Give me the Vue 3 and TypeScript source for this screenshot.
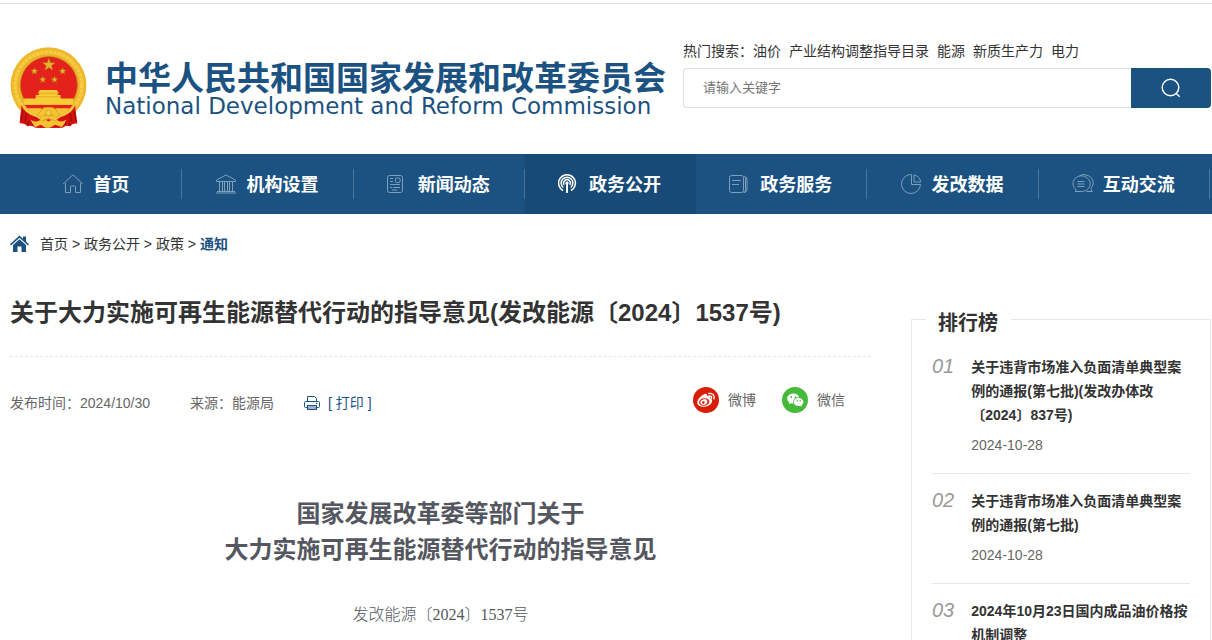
<script setup lang="ts">
interface Rank {
  title: string
  date: string
}

const hotWords: string[] = ['油价', '产业结构调整指导目录', '能源', '新质生产力', '电力']

const navItems: { icon: string; label: string }[] = [
  { icon: 'home', label: '首页' },
  { icon: 'bank', label: '机构设置' },
  { icon: 'news', label: '新闻动态' },
  { icon: 'signal', label: '政务公开' },
  { icon: 'service', label: '政务服务' },
  { icon: 'pie', label: '发改数据' },
  { icon: 'chat', label: '互动交流' },
]
const activeNav = 'signal'

const ranks: Rank[] = [
  { title: '关于违背市场准入负面清单典型案例的通报(第七批)(发改办体改〔2024〕837号)', date: '2024-10-28' },
  { title: '关于违背市场准入负面清单典型案例的通报(第七批)', date: '2024-10-28' },
  { title: '2024年10月23日国内成品油价格按机制调整', date: '2024-10-23' },
]

function star(cx: number, cy: number, r: number): string {
  return Array.from({ length: 10 }, (_, i) => {
    const radius = i % 2 ? r * 0.4 : r
    const a = (Math.PI / 5) * i - Math.PI / 2
    return `${(cx + radius * Math.cos(a)).toFixed(1)},${(cy + radius * Math.sin(a)).toFixed(1)}`
  }).join(' ')
}

const stars: string[] = [star(147, 73, 20), star(104, 92, 11), star(188, 92, 11), star(129, 117, 11), star(164, 117, 11)]
</script>

<template>
  <div class="page">
    <header class="header">
      <a class="logo" href="#">
        <svg class="emblem" viewBox="32 20 228 244" aria-hidden="true">
          <path d="M66 192L60 247Q75 246 83 256Q98 252 106 260H188Q198 252 211 256Q217 246 232 248L224 192Z" fill="#d5120f" />
          <path d="M75 215L70 245M90 226L84 254M205 226L210 254M218 212L223 245M103 235L97 252M193 235L197 252" stroke="#970d0b" stroke-width="4" />
          <circle cx="146" cy="134" r="113" fill="#f0bd30" />
          <circle cx="146" cy="134" r="109" fill="none" stroke="#e6ae26" stroke-width="2" />
          <circle cx="146" cy="134" r="99" fill="none" stroke="#f8cd45" stroke-width="9" stroke-dasharray="9 4" />
          <circle cx="146" cy="134" r="90" fill="none" stroke="#e6ae26" stroke-width="3" />
          <path d="M78 183A85 85 0 1 1 216 183L219 188H74Z" fill="#e5211c" stroke="#b98315" stroke-width="2" />
          <path d="M74 192H219L202 211H168L160 200H132L124 211H91Z" fill="#e5211c" />
          <polygon v-for="points in stars" :key="points" :points="points" fill="#e5b52d" stroke="#a77a13" stroke-width="1" />
          <path d="M120 148H171L177 158H173V163H182V173H220V192H73V173H108V163H118V158H114Z" fill="#f7cc37" />
          <path d="M117 158H174M108 168H182" stroke="#d79d1b" stroke-width="2" />
          <path d="M84 202H126L118 222L90 216ZM166 202H208L202 216L174 222Z" fill="#f3c436" />
          <path d="M66 193Q74 218 111 229L128 241L146 232L164 241L181 229Q217 218 225 193L230 245Q208 251 199 239L178 260H113L93 239Q78 251 61 245Z" fill="#d5120f" />
          <path d="M69 209L66 240M80 218L76 243M210 218L216 243M222 209L227 240" stroke="#8e0c0b" stroke-width="3" />
          <path d="M92 236Q106 246 120 238L135 235L146 242L158 235L172 238Q186 246 199 236Q196 248 186 258L166 251L150 260H137L123 251L106 259Q98 248 92 236Z" fill="#f5c431" />
          <path d="M112 222Q122 216 124 206Q132 200 146 200Q160 200 168 206Q170 216 181 222L167 230L155 219H137L125 230Z" fill="#f5c431" stroke="#d49a1a" stroke-width="2" />
          <circle cx="146" cy="216" r="8" fill="#f8d14b" stroke="#d49a1a" stroke-width="2" />
          <path d="M127 241Q146 225 167 241" fill="none" stroke="#e6aa22" stroke-width="4" />
        </svg>
        <span class="logo-text">
          <span class="logo-cn">中华人民共和国国家发展和改革委员会</span>
          <span class="logo-en">National Development and Reform Commission</span>
        </span>
      </a>
      <div class="search">
        <div class="hot">
          <span>热门搜索：</span>
          <a v-for="word in hotWords" :key="word" href="#">{{ word }}</a>
        </div>
        <form class="search-form" @submit.prevent>
          <input type="text" placeholder="请输入关键字" aria-label="请输入关键字" />
          <button type="submit" aria-label="搜索">
            <svg width="20" height="20" viewBox="0 0 20 20" fill="none" stroke="#fff" stroke-width="1.4" aria-hidden="true">
              <circle cx="9.5" cy="9.5" r="8.3" />
              <path d="M15 15.2L18.7 18.7" />
            </svg>
          </button>
        </form>
      </div>
    </header>

    <nav class="nav">
      <a v-for="item in navItems" :key="item.icon" href="#" :class="['nav-item', { active: item.icon === activeNav }]">
        <svg class="nav-icon" viewBox="0 0 22 22" aria-hidden="true">
          <g v-if="item.icon === 'home'">
            <path d="M1 11.2L10.2 2.5Q11 1.8 11.8 2.5L21 11.2" />
            <path d="M3.5 10V19.5H8.5V14Q8.5 13 9.5 13H12.5Q13.5 13 13.5 14V19.5H18.5V10" />
          </g>
          <g v-else-if="item.icon === 'bank'">
            <path d="M1.5 7L11 2L20.5 7V8.5H1.5Z" />
            <path d="M4.5 8.5V18.5M7.5 8.5V18.5M9.5 8.5V18.5M12.5 8.5V18.5M14.5 8.5V18.5M17.5 8.5V18.5M2 18.5H20M1 20H21" />
          </g>
          <g v-else-if="item.icon === 'news'">
            <rect x=".5" y="2.5" width="15" height="17" rx="2" />
            <path d="M3 5.5H6M3 8.5H6M3 11.5H13M3 14.5H5M6 14.5H13M5 17H10" />
            <rect x="8.5" y="5" width="4.5" height="4.5" rx="1" />
          </g>
          <g v-else-if="item.icon === 'signal'">
            <path d="M5 17.5A8.4 8.4 0 1 1 13 17.5M5.3 14.5A5.8 5.8 0 1 1 12.7 14.5M6.3 11.8A3.3 3.3 0 1 1 11.7 11.8" stroke-width="1.5" />
            <path d="M9 10.5V20" stroke-width="2" />
            <circle cx="9" cy="10" r="1.2" fill="currentColor" />
          </g>
          <g v-else-if="item.icon === 'service'">
            <rect x=".5" y="2.5" width="14" height="17" rx="2" />
            <path d="M15 3Q16.5 3.2 16.5 5V17.5Q16.5 19 15 19.5M17 4Q18 4.4 18 6V16.5Q18 19.3 14.5 19.5M3 7.5H12M3 11.5H10" />
          </g>
          <g v-else-if="item.icon === 'pie'">
            <path d="M9.5 1.5A9.5 9.5 0 1 0 19.5 11.5H10.5V1.5Z" />
            <path d="M13 1.8V9H19.7A9 9 0 0 0 13 1.8Z" />
          </g>
          <g v-else>
            <path d="M4.2 16.800A8.600 7.800 0 1 1 9.500 18.500H3Q4.200 17.900 4.200 16.800Z" />
            <path d="M7.500 2.500Q12 .3 16.700 2.800A8.600 8 0 0 1 19 15.200Q18.600 17 20.500 18.500H14.500M5.500 8.500H12.500M5.500 11H12.500M5.500 13.500H12.500" />
          </g>
        </svg>
        <span>{{ item.label }}</span>
      </a>
    </nav>

    <div class="breadcrumb">
      <svg width="20" height="18" viewBox="0 0 20 18" aria-hidden="true">
        <path d="M0 9.3L9.5 .5L13 3.7V1.5H16V6.5L19 9.3L18 10.5L9.5 2.8L1 10.5Z" fill="#1b5282" />
        <path d="M3 10L9.5 4.2L16 10V17H11.5V11.5H7.5V17H3Z" fill="#1b5282" />
      </svg>
      <p><a href="#">首页</a> &gt; <a href="#">政务公开</a> &gt; <a href="#">政策</a> &gt; <a class="current" href="#">通知</a></p>
    </div>

    <div class="columns">
      <main class="article">
        <h1>关于大力实施可再生能源替代行动的指导意见(发改能源〔2024〕1537号)</h1>
        <div class="meta">
          <span class="published">发布时间：2024/10/30</span>
          <span class="source">来源：能源局</span>
          <button class="print" type="button">
            <svg width="16" height="16" viewBox="0 0 16 16" fill="none" stroke="#1b5282" aria-hidden="true">
              <path d="M3.5 6V1.5H10.5L12.5 3.5V6M3.5 12.5H1.5Q.5 12.5 .5 11.5V7.5Q.5 6.5 1.5 6.5H14.5Q15.5 6.5 15.5 7.5V11.5Q15.5 12.5 14.5 12.5H12.5" />
              <rect x="3.5" y="10.5" width="9" height="4" fill="#9ab3ca" />
              <path d="M12 8.5H13.5" />
            </svg>
            <span>[ 打印 ]</span>
          </button>
          <div class="share">
            <a href="#">
              <svg width="26" height="26" viewBox="0 0 26 26" aria-hidden="true">
                <circle cx="13" cy="13" r="13" fill="#d81e06" />
                <path d="M11.2 7.2C13 6.3 14.7 7 14.1 9.2C16.8 8.3 18 9.2 17.3 11.2C19.3 12 19.8 14.2 18.3 16.3C16 20.2 8.2 21.2 5 17.7C2.4 14.6 7 9 11.2 7.2Z" fill="#fff" />
                <ellipse cx="11.2" cy="15" rx="5.2" ry="3.7" transform="rotate(-10 11.2 15)" fill="#d81e06" />
                <ellipse cx="10.9" cy="15.1" rx="3.6" ry="2.8" transform="rotate(-20 10.9 15.1)" fill="#fff" />
                <circle cx="10.3" cy="15.6" r="1.3" fill="#d81e06" />
                <path d="M15.8 6.5C19.5 5.6 22 8.6 20.9 12M16.3 9C18 8.6 19 9.7 18.5 11.3" fill="none" stroke="#fff" stroke-width="1.3" stroke-linecap="round" />
              </svg>
              <span>微博</span>
            </a>
            <a href="#">
              <svg width="26" height="26" viewBox="0 0 26 26" aria-hidden="true">
                <circle cx="13" cy="13" r="13" fill="#45b939" />
                <path d="M11.4 6.5C7.8 6.5 5.2 8.7 5.2 11.5C5.2 13.1 6 14.5 7.4 15.4L6.8 17.3L9.1 16.2Q10.2 16.5 11.4 16.4C10.5 12.9 13.2 10.1 17.2 10.2C16.6 8 14.3 6.5 11.4 6.5Z" fill="#fff" />
                <path d="M16.6 11C13.8 11 11.8 12.7 11.8 15C11.8 17.9 15 19.7 18.1 18.8L20 19.8L19.5 18.1C20.7 17.3 21.4 16.2 21.4 15C21.4 12.7 19.3 11 16.6 11Z" fill="#fff" />
                <g fill="#45b939">
                  <circle cx="9.3" cy="10.2" r=".9" />
                  <circle cx="13.5" cy="10.2" r=".9" />
                  <circle cx="15.2" cy="13.8" r=".7" />
                  <circle cx="18.2" cy="13.8" r=".7" />
                </g>
              </svg>
              <span>微信</span>
            </a>
          </div>
        </div>
        <div class="content">
          <h2>国家发展改革委等部门关于<br />大力实施可再生能源替代行动的指导意见</h2>
          <p>发改能源〔2024〕1537号</p>
        </div>
      </main>

      <aside class="ranking">
        <h2>排行榜</h2>
        <ol>
          <li v-for="(rank, i) in ranks" :key="i">
            <span class="number">0{{ i + 1 }}</span>
            <div>
              <a href="#">{{ rank.title }}</a>
              <time>{{ rank.date }}</time>
            </div>
          </li>
        </ol>
      </aside>
    </div>
  </div>
</template>

<style>
html {
  scrollbar-width: none;
}
body {
  margin: 0;
  background: #fff;
}
</style>

<style scoped>
.page {
  margin-top: 3px;
  border-top: 1px solid #ddd;
  font: 14px/24px "Liberation Sans", "Noto Sans CJK SC", sans-serif;
  color: #333;
}
a {
  color: inherit;
  text-decoration: none;
}
h1,
h2,
p,
ol {
  margin: 0;
  padding: 0;
}
svg {
  flex: none;
}

.header {
  display: flex;
  height: 150px;
  padding: 0 1px 0 10px;
}
.logo {
  display: flex;
  flex: none;
  gap: 18px;
  align-items: flex-start;
  padding-top: 43px;
  color: #1b5282;
}
.emblem {
  width: 77px;
  height: 82px;
}
.logo-text {
  display: flex;
  flex-direction: column;
  padding-top: 15px;
  white-space: nowrap;
}
.logo-cn {
  font-size: 33px;
  font-weight: 700;
  line-height: 34px;
}
.logo-en {
  font-family: "DejaVu Sans", sans-serif;
  font-size: 23px;
  line-height: 20px;
}
.search {
  flex: 1;
  margin-left: 17px;
  padding-top: 35px;
}
.hot {
  display: flex;
  white-space: nowrap;
}
.hot a {
  margin-right: 8px;
}
.search-form {
  display: flex;
  height: 40px;
  margin-top: 5px;
}
.search-form input {
  flex: 1;
  min-width: 0;
  box-sizing: border-box;
  padding: 0 19px 2px;
  border: 1px solid #ddd;
  border-right: 0;
  border-radius: 4px 0 0 4px;
  outline: none;
  font-family: inherit;
  font-size: 13px;
  color: #333;
}
.search-form input::placeholder {
  color: #757575;
}
.search-form button {
  display: flex;
  align-items: center;
  justify-content: center;
  width: 80px;
  padding: 0;
  border: 0;
  border-radius: 0 4px 4px 0;
  background: #1b5282;
}

.nav {
  display: grid;
  grid-template-columns: repeat(7, 1fr);
  height: 60px;
  padding: 0 2px 0 11px;
  background: #1b5282;
  color: #fff;
  font-size: 18px;
  font-weight: 700;
}
.nav-item {
  display: flex;
  gap: 9px;
  align-items: center;
  justify-content: center;
  padding-right: 2px;
  background: linear-gradient(#49759b, #49759b) right center / 1px 30px no-repeat;
}
.nav-item span {
  padding-top: 1px;
}
.nav-item.active {
  background: #174a77;
}
.nav-icon {
  width: 22px;
  height: 22px;
  fill: none;
  stroke: #7f9fbb;
  stroke-width: 1;
}
.active .nav-icon {
  stroke: #fff;
}

.breadcrumb {
  display: flex;
  gap: 10px;
  align-items: center;
  padding: 18px 10px;
}
.current {
  color: #1b5282;
  font-weight: 700;
}

.columns {
  display: flex;
  gap: 40px;
  align-items: flex-start;
  padding: 0 1px 0 10px;
}
.article {
  flex: 1;
  min-width: 0;
  padding-top: 21px;
}
.article h1 {
  padding-bottom: 25px;
  border-bottom: 1px dashed #e6e6e6;
  font-size: 24px;
  line-height: 36px;
}
.meta {
  display: flex;
  align-items: center;
  margin-top: 30px;
  color: #666;
}
.source {
  margin-left: 40px;
}
.print {
  display: flex;
  gap: 8px;
  align-items: center;
  margin-left: 30px;
  padding: 0;
  border: 0;
  background: none;
  font: inherit;
  color: #1b5282;
}
.share {
  display: flex;
  gap: 26px;
  margin-left: auto;
  padding: 0 26px 6px 0;
}
.share a {
  display: flex;
  gap: 9px;
  align-items: center;
}
.content {
  margin-top: 77px;
  text-align: center;
  color: #555760;
}
.content h2 {
  font-size: 24px;
  line-height: 36px;
}
.content p {
  margin-top: 35px;
  font-family: "Liberation Serif", "Noto Sans CJK SC", serif;
  font-size: 16px;
  font-weight: 300;
}

.ranking {
  position: relative;
  box-sizing: border-box;
  width: 300px;
  flex: none;
  margin-top: 45px;
  padding: 20px;
  border: 1px solid #e6e6e6;
}
.ranking h2 {
  position: absolute;
  top: -11px;
  left: 14px;
  padding: 0 13px 0 12px;
  background: #fff;
  font-size: 20px;
  line-height: 28px;
}
.ranking ol {
  list-style: none;
}
.ranking li {
  display: flex;
  gap: 17px;
  padding: 15px 0 16px;
  border-bottom: 1px solid #e6e6e6;
}
.ranking li > div {
  flex: 1;
}
.number {
  font-size: 20px;
  font-style: italic;
  line-height: 22px;
  color: #999;
}
.ranking li a {
  display: block;
  font-weight: 700;
}
.ranking time {
  display: block;
  margin-top: 6px;
  color: #666;
}
</style>
